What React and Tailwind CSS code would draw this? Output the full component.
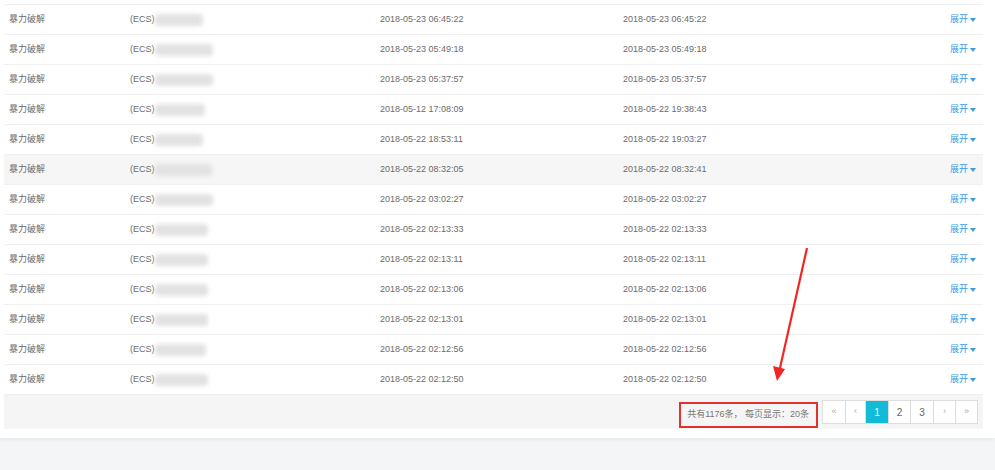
import React from "react";

const rows = [
  {start: "2018-05-23 06:45:22", end: "2018-05-23 06:45:22", blur: 48},
  {start: "2018-05-23 05:49:18", end: "2018-05-23 05:49:18", blur: 58},
  {start: "2018-05-23 05:37:57", end: "2018-05-23 05:37:57", blur: 58},
  {start: "2018-05-12 17:08:09", end: "2018-05-22 19:38:43", blur: 50},
  {start: "2018-05-22 18:53:11", end: "2018-05-22 19:03:27", blur: 48},
  {start: "2018-05-22 08:32:05", end: "2018-05-22 08:32:41", blur: 57, hover: true},
  {start: "2018-05-22 03:02:27", end: "2018-05-22 03:02:27", blur: 58},
  {start: "2018-05-22 02:13:33", end: "2018-05-22 02:13:33", blur: 53},
  {start: "2018-05-22 02:13:11", end: "2018-05-22 02:13:11", blur: 53},
  {start: "2018-05-22 02:13:06", end: "2018-05-22 02:13:06", blur: 53},
  {start: "2018-05-22 02:13:01", end: "2018-05-22 02:13:01", blur: 53},
  {start: "2018-05-22 02:12:56", end: "2018-05-22 02:12:56", blur: 51},
  {start: "2018-05-22 02:12:50", end: "2018-05-22 02:12:50", blur: 53},
];

function Row({row}) {
  return (
    <div
      className={`grid grid-cols-[121px_250px_243px_1fr_auto] h-[30px] items-center border-b border-[#f0f0f0] ${
        row.hover ? "bg-[#f6f6f6]" : "bg-white"
      }`}>
      <div className="pl-[5px]">暴力破解</div>
      <div className="pl-[5px] flex items-center">
        <span>(ECS)</span>
        <span
          className="inline-block h-[12px] bg-[#e2e2e2] blur-[2px] rounded-sm"
          style={{width: row.blur}}
        />
      </div>
      <div className="pl-[5px]">{row.start}</div>
      <div className="pl-[5px]">{row.end}</div>
      <div className="pr-[7px] text-[#3d9ae6] flex items-center gap-[2px]">
        展开
        <svg width="6" height="4" viewBox="0 0 6 4">
          <path d="M0 0h6L3 4z" fill="#3d9ae6" />
        </svg>
      </div>
    </div>
  );
}

function Pager() {
  const btns = [
    {label: "«", w: "w-[24px]"},
    {label: "‹", w: "w-[21px]"},
    {label: "1", w: "w-[24px]", active: true},
    {label: "2", w: "w-[23px]"},
    {label: "3", w: "w-[24px]"},
    {label: "›", w: "w-[23px]"},
    {label: "»", w: "w-[23px]"},
  ];
  return (
    <div className="flex h-[24px]">
      {btns.map((b, i) => (
        <div
          key={i}
          className={`${b.w} flex items-center justify-center border border-[#dedede] -ml-px first:ml-0 ${
            b.active
              ? "bg-[#12bbd8] border-[#12bbd8] text-white text-[10px]"
              : "bg-white " + (b.label.match(/\d/) ? "text-[10px] text-[#666]" : "text-[9px] text-[#aaa]")
          }`}>
          {b.label}
        </div>
      ))}
    </div>
  );
}

export default function App() {
  return (
    <div
      className="relative w-[995px] h-[470px] bg-[#f3f5f7] overflow-hidden text-[9px] text-[#6c6c6c]"
      style={{fontFamily: '"Liberation Sans", "Noto Sans CJK SC", sans-serif'}}>
      <div className="bg-white pb-[9px] pl-[4px] pr-[12px] shadow-[0_2px_4px_rgba(0,0,0,0.06)]">
        <div className="h-[5px] border-b border-[#f0f0f0]" />
        {rows.map((r, i) => (
          <Row key={i} row={r} />
        ))}
        <div className="h-[34px] bg-[#f5f5f5] flex justify-end items-start pt-[5px] pr-[5px]">
          <div className="mt-[2px] h-[26px] border-2 border-[#e2322d] flex items-center pl-[6px] pr-[7px] mr-[4px] text-[#777]">
            共有1176条， 每页显示：20条
          </div>
          <Pager />
        </div>
      </div>

      <svg className="absolute left-0 top-0 pointer-events-none" width="995" height="470">
        <line x1="807" y1="248" x2="780" y2="368" stroke="#f22525" strokeWidth="2.2" />
        <path d="M773 366 L785 369 L777 381 Z" fill="#f22525" />
      </svg>
    </div>
  );
}
